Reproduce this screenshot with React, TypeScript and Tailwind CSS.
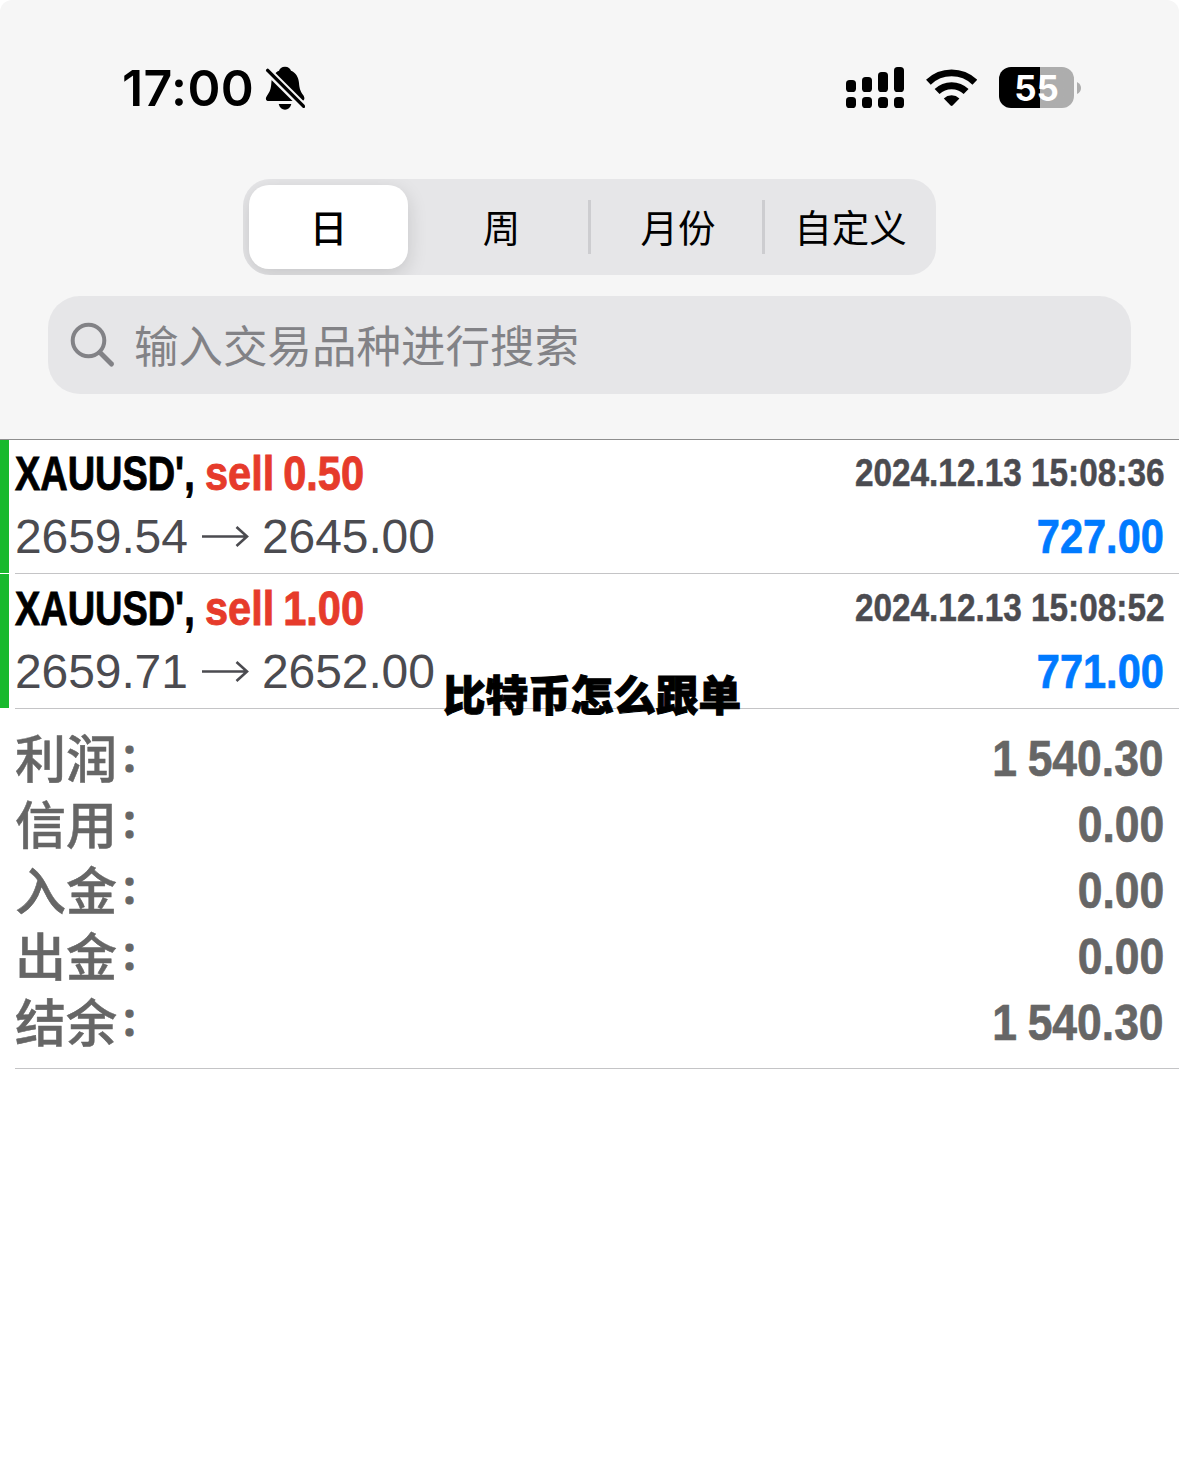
import React from 'react';

interface Trade {
  symbol: string;
  side: string;
  volume: string;
  open: string;
  close: string;
  time: string;
  profit: string;
}

const trades: Trade[] = [
  { symbol: "XAUUSD'", side: 'sell', volume: '0.50', open: '2659.54', close: '2645.00', time: '2024.12.13 15:08:36', profit: '727.00' },
  { symbol: "XAUUSD'", side: 'sell', volume: '1.00', open: '2659.71', close: '2652.00', time: '2024.12.13 15:08:52', profit: '771.00' },
];

const summary = [
  { label: '利润', value: '1 540.30' },
  { label: '信用', value: '0.00' },
  { label: '入金', value: '0.00' },
  { label: '出金', value: '0.00' },
  { label: '结余', value: '1 540.30' },
];

const BellOff = () => (
  <svg className="ml-[11px] h-11 w-10" viewBox="465 48 120 132">
    <path
      d="M525 50C535 50 541 56 543 62C558 68 566 82 567 99C568 116 572 125 580 136C585 144 585 153 574 153H476C466 153 466 144 471 137C480 125 483 116 484 99C485 82 493 68 507 62C509 56 515 50 525 50Z"
      fill="#000"
    />
    <path d="M506 162H544C541 173 534 179 525 179C516 179 509 173 506 162Z" fill="#000" />
    <path d="M462 51L592 181" stroke="#f6f6f6" strokeWidth="23" />
    <path d="M473 61L581 169" stroke="#000" strokeWidth="10" strokeLinecap="round" />
  </svg>
);

const Signal = () => (
  <svg className="h-[41px] w-[58px]" viewBox="0 0 58 41">
    <rect x="0" y="13" width="10" height="12" rx="3.6" />
    <rect x="16" y="10" width="10" height="15" rx="3.6" />
    <rect x="32" y="5" width="10" height="20" rx="3.6" />
    <rect x="48" y="0" width="10" height="25" rx="3.6" />
    {[0, 16, 32, 48].map((x) => (
      <rect key={x} x={x} y="30" width="10" height="11" rx="3.6" />
    ))}
  </svg>
);

const Wifi = () => (
  <svg className="mr-px ml-[21px] h-[38px] w-[52px]" viewBox="0 0 52 38" fill="none">
    <path d="M3.4 13.2A33.6 33.6 0 0 1 49.8 13.2" stroke="#000" strokeWidth="6.8" />
    <path d="M12.1 22.6A20.8 20.8 0 0 1 41.1 22.6" stroke="#000" strokeWidth="7" />
    <path d="M18.8 29.4A11.5 11.5 0 0 1 34.4 29.4L27.6 36.6Q26.6 37.5 25.6 36.6Z" fill="#000" />
  </svg>
);

const Battery = () => (
  <div className="ml-[21px] flex items-center">
    <div className="flex h-[41px] w-[75px] items-center justify-center rounded-[12px] bg-linear-to-r from-black from-[55%] to-[#adadad] to-[55%] pt-[2px] font-['Inter',sans-serif] text-[35px] leading-none font-bold text-white">
      55
    </div>
    <svg className="ml-[3px] h-[12px] w-[4px]" viewBox="0 0 4 12">
      <path d="M0 0Q4 2 4 6Q4 10 0 12Z" fill="#adadad" />
    </svg>
  </div>
);

const StatusBar = () => (
  <div className="flex h-[179px] items-start justify-between pr-[98px] pl-[122px]">
    <div className="flex items-center pt-[66px]">
      <span className="w-[132px] font-['Inter',sans-serif] text-[50px] leading-[44px] font-semibold tracking-[0.4px] whitespace-nowrap">17:00</span>
      <BellOff />
    </div>
    <div className="flex items-center pt-[67px]">
      <Signal />
      <Wifi />
      <Battery />
    </div>
  </div>
);

const PeriodTabs = () => (
  <div className="mx-auto flex h-24 w-[693px] items-center overflow-hidden rounded-[27px] bg-[#e6e6e8] pl-[6px] font-['Noto_Sans_CJK_SC',sans-serif] text-[37.5px] leading-none text-black">
    <button className="h-[84px] w-[159px] rounded-[20px] bg-white pb-[2px] font-medium shadow-[0_6px_20px_rgba(0,0,0,0.14)]">日</button>
    <button className="ml-[6px] h-[84px] w-[174px] pb-[2px] pl-px">周</button>
    <span className="h-[54px] w-[3px] bg-[#cdcdd0]" />
    <button className="h-[84px] w-[171px] pb-[2px] pl-[3px]">月份</button>
    <span className="h-[54px] w-[3px] bg-[#cdcdd0]" />
    <button className="h-[84px] w-[171px] pb-[2px]">自定义</button>
  </div>
);

const SearchField = () => (
  <div className="mx-12 mt-[21px] flex h-[98px] items-center rounded-[32px] bg-[#e6e6e8] pl-[22px] text-[#828286]">
    <svg className="h-[46px] w-[46px]" viewBox="0 0 46 46" fill="none" stroke="currentColor">
      <circle cx="18.5" cy="18.5" r="15.8" strokeWidth="4" />
      <path d="M30 30.5L41.5 42" strokeWidth="5" strokeLinecap="round" />
    </svg>
    <span className="ml-[18px] pb-px font-['Noto_Sans_CJK_SC',sans-serif] text-[44.5px] leading-none">输入交易品种进行搜索</span>
  </div>
);

const TradeRow = ({ trade, first }: { trade: Trade; first: boolean }) => (
  <div className={`flex font-['Liberation_Sans',sans-serif] ${first ? 'h-[134px]' : 'h-[135px]'}`}>
    <div className="mb-px w-[9px] bg-[#18b92d]" />
    <div className={`ml-[6px] flex flex-1 flex-col border-b border-[#c4c4c6] pr-[15px] ${first ? '' : 'pt-px'}`}>
      <div className="flex h-[66px] items-center justify-between whitespace-nowrap">
        <div className="flex pt-px text-[48px] leading-[66px] font-bold [-webkit-text-stroke:0.9px]">
          <span className="w-[190px] origin-left scale-x-[0.79] text-black">{trade.symbol},</span>
          <span className="origin-left scale-x-[0.865] text-[#e63b2b] [word-spacing:-3px]">{trade.side} {trade.volume}</span>
        </div>
        <span className="origin-right scale-x-[0.866] text-[38.5px] leading-[66px] font-bold text-[#4b4b50] [-webkit-text-stroke:0.5px]">{trade.time}</span>
      </div>
      <div className="flex h-[61px] items-center justify-between text-[48px] leading-[61px]">
        <div className="flex items-center text-[#4b4b50]">
          <span className="w-[187px] tracking-[-0.1px]">{trade.open}</span>
          <svg className="h-[22px] w-[60px]" viewBox="0 0 60 22" fill="none" stroke="currentColor" strokeWidth="2.6">
            <path d="M0 10.5H45M34.5 1L45 10.5L34.5 20" />
          </svg>
          <span className="tracking-[-0.1px]">{trade.close}</span>
        </div>
        <span className="origin-right scale-x-[0.865] font-bold text-[#007aff] [-webkit-text-stroke:0.7px]">{trade.profit}</span>
      </div>
    </div>
  </div>
);

const Summary = () => (
  <div className="ml-[15px] h-[360px] border-b border-[#c4c4c6] pt-[17px] pr-[15px] text-[#666]">
    {summary.map((item) => (
      <div key={item.label} className="flex h-[66px] items-center justify-between">
        <span className="flex items-center pb-[6px] font-['Noto_Sans_CJK_SC',sans-serif] text-[51px] leading-[60px] font-medium [-webkit-text-stroke:0.5px]">
          {item.label}
          <span className="ml-[3px] pb-[3px] text-[38px] leading-none font-bold [-webkit-text-stroke:1px]">：</span>
        </span>
        <span className="origin-right scale-x-[0.88] font-['Liberation_Sans',sans-serif] text-[50.5px] leading-[66px] font-bold [-webkit-text-stroke:0.7px] [word-spacing:-2px]">{item.value}</span>
      </div>
    ))}
  </div>
);

const App: React.FC = () => {
  return (
    <div className="relative h-[1463px] w-[1179px] overflow-hidden bg-white">
      <header className="h-[440px] rounded-t-[12px] border-b border-[#8e8e8e] bg-[#f6f6f6]">
        <StatusBar />
        <PeriodTabs />
        <SearchField />
      </header>
      <main>
        {trades.map((trade, i) => (
          <TradeRow key={trade.time} trade={trade} first={i === 0} />
        ))}
        <Summary />
      </main>
      <div className="absolute top-[662px] left-[443px] font-['Noto_Sans_CJK_SC',sans-serif] text-[42.6px] leading-[62px] font-black whitespace-nowrap text-black [-webkit-text-stroke:1px]">
        比特币怎么跟单
      </div>
    </div>
  );
};

export default App;
